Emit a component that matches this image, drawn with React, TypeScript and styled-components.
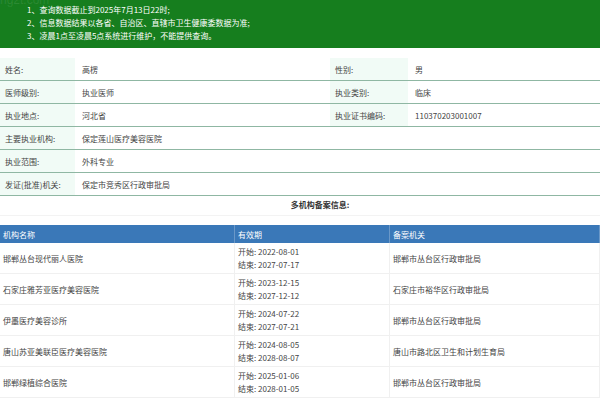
import { createGlobalStyle, styled } from 'styled-components';

const Global = createGlobalStyle`
    body {
        margin: 0;
        font-family: "Noto Sans CJK SC", "Liberation Sans", sans-serif;
        font-size: 8px;
        color: #444;
        background: #fff;
    }
`;

const Banner = styled.div`
    background: #167e1e;
    height: 48px;
    padding: 3px 0 0 27px;
    box-sizing: border-box;
    color: #fff;
    position: relative;
    overflow: hidden;
`;

const Watermark = styled.div`
    position: absolute;
    left: 0;
    top: -7px;
    font-size: 12px;
    color: rgba(255, 255, 255, 0.1);
    font-family: "Liberation Sans", sans-serif;
`;

const Notice = styled.div`
    position: relative;
    font-size: 8px;
    line-height: 13px;
`;

const InfoTable = styled.div`
    margin-top: 10px;
`;

const InfoRow = styled.div`
    display: grid;
    grid-template-columns: 75px 255px 78px 1fr;
    height: 22px;
    border-bottom: 1px solid #8fb7a3;
`;

const Label = styled.div<{ $empty?: boolean }>`
    display: flex;
    align-items: center;
    padding-left: 5px;
    background: ${p => (p.$empty ? '#fff' : '#f1fbf6')};
`;

const Value = styled.div`
    display: flex;
    align-items: center;
    padding-left: 7px;
`;

const SectionTitle = styled.div`
    text-align: center;
    font-weight: 700;
    color: #333;
    height: 16px;
    padding: 3px 0 0 40px;
    border-bottom: 1px solid #f3f3f3;
`;

const Grid = styled.div`
    margin-top: 9px;
    display: grid;
    grid-template-columns: 235px 155px 1fr;
`;

const Head = styled.div`
    background: #3a78b8;
    color: #fff;
    height: 18px;
    display: flex;
    align-items: center;
    padding-left: 3px;
    border-right: 1px solid #6a98c8;
`;

const Cell = styled.div`
    height: 31px;
    box-sizing: border-box;
    display: flex;
    flex-direction: column;
    justify-content: center;
    padding-left: 3px;
    line-height: 13px;
    border-bottom: 1px solid #f0f0f0;
    border-right: 1px solid #f0f0f0;
`;

const info = [
    ['姓名:', '高楞', '性别:', '男'],
    ['医师级别:', '执业医师', '执业类别:', '临床'],
    ['执业地点:', '河北省', '执业证书编码:', '110370203001007'],
    ['主要执业机构:', '保定莲山医疗美容医院', '', ''],
    ['执业范围:', '外科专业', '', ''],
    ['发证(批准)机关:', '保定市竞秀区行政审批局', '', ''],
];

const orgs = [
    ['邯郸丛台现代丽人医院', '2022-08-01', '2027-07-17', '邯郸市丛台区行政审批局'],
    ['石家庄雅芳亚医疗美容医院', '2023-12-15', '2027-12-12', '石家庄市裕华区行政审批局'],
    ['伊墨医疗美容诊所', '2024-07-22', '2027-07-21', '邯郸市丛台区行政审批局'],
    ['唐山苏亚美联臣医疗美容医院', '2024-08-05', '2028-08-07', '唐山市路北区卫生和计划生育局'],
    ['邯郸绿植综合医院', '2025-01-06', '2028-01-05', '邯郸市丛台区行政审批局'],
];

export default function App() {
    return (
        <>
            <Global />
            <Banner>
                <Watermark>ng2t.com</Watermark>
                <Notice>1、查询数据截止到2025年7月13日22时;</Notice>
                <Notice>2、信息数据结果以各省、自治区、直辖市卫生健康委数据为准;</Notice>
                <Notice>3、凌晨1点至凌晨5点系统进行维护，不能提供查询。</Notice>
            </Banner>
            <InfoTable>
                {info.map(r => (
                    <InfoRow key={r[0]}>
                        <Label>{r[0]}</Label>
                        <Value>{r[1]}</Value>
                        <Label $empty={!r[2]}>{r[2]}</Label>
                        <Value>{r[3]}</Value>
                    </InfoRow>
                ))}
            </InfoTable>
            <SectionTitle>多机构备案信息:</SectionTitle>
            <Grid>
                <Head>机构名称</Head>
                <Head>有效期</Head>
                <Head>备案机关</Head>
                {orgs.map(o => [
                    <Cell key={o[0] + 'a'}>{o[0]}</Cell>,
                    <Cell key={o[0] + 'b'}>
                        <div>开始: {o[1]}</div>
                        <div>结束: {o[2]}</div>
                    </Cell>,
                    <Cell key={o[0] + 'c'}>{o[3]}</Cell>,
                ])}
            </Grid>
        </>
    );
}
